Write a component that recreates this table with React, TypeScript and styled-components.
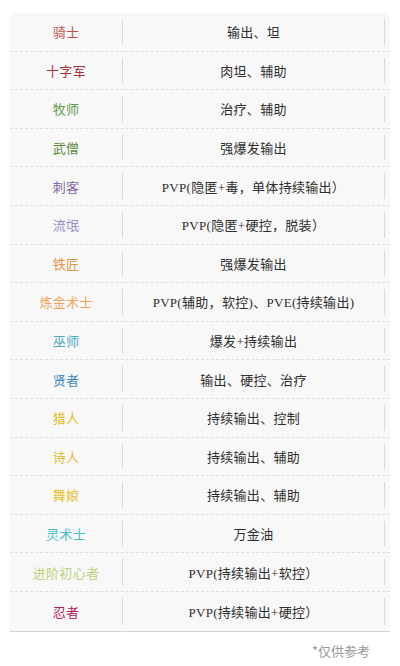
import React from 'react';
import styled, { createGlobalStyle } from 'styled-components';

const GlobalStyle = createGlobalStyle`
  html, body {
    margin: 0;
    padding: 0;
    background: #ffffff;
  }
  body {
    font-family: "Liberation Serif", "Noto Sans CJK SC", serif;
  }
`;

const Page = styled.div({
  width: "400px",
  height: "666px",
  padding: "13px 10px 0 10px",
  boxSizing: "border-box",
  display: "flex",
  flexDirection: "column",
});

const Table = styled.div({
  display: "flex",
  flexDirection: "column",
  background: "#f8f8f8",
  borderBottom: "1px solid #d4d4d4",
});

const Row = styled.div<{ $last?: boolean }>`
  display: grid;
  grid-template-columns: 113px 1fr;
  height: 38.6px;
  box-sizing: border-box;
  border-bottom: ${(p) => (p.$last ? "none" : "1px dashed #dcdcdc")};
  padding: 6px 5px 6px 0;
`;

const Cell = styled.div<{ $color?: string }>`
  display: flex;
  align-items: center;
  justify-content: center;
  border-right: 1px solid #d8d8d8;
  font-size: 13px;
  letter-spacing: 0.3px;
  color: ${(p) => p.$color || "#2e2e2e"};
  white-space: nowrap;
`;

const Note = styled.div({
  alignSelf: "flex-end",
  marginTop: "9px",
  marginRight: "20px",
  fontSize: "13px",
  color: "#9a9a9a",
  fontFamily: '"Noto Sans CJK SC", sans-serif',
});

type Job = { name: string; color: string; role: string };

const jobs: Job[] = [
  { name: "骑士", color: "#c0504d", role: "输出、坦" },
  { name: "十字军", color: "#a8323a", role: "肉坦、辅助" },
  { name: "牧师", color: "#5f9a45", role: "治疗、辅助" },
  { name: "武僧", color: "#5e8e3e", role: "强爆发输出" },
  { name: "刺客", color: "#8068a8", role: "PVP(隐匿+毒，单体持续输出）" },
  { name: "流氓", color: "#9c8fc4", role: "PVP(隐匿+硬控，脱装）" },
  { name: "铁匠", color: "#e39545", role: "强爆发输出" },
  { name: "炼金术士", color: "#eea55a", role: "PVP(辅助，软控)、PVE(持续输出)" },
  { name: "巫师", color: "#4fa9c4", role: "爆发+持续输出" },
  { name: "贤者", color: "#3f8bbd", role: "输出、硬控、治疗" },
  { name: "猎人", color: "#e5bd24", role: "持续输出、控制" },
  { name: "诗人", color: "#e4bd38", role: "持续输出、辅助" },
  { name: "舞娘", color: "#e6be28", role: "持续输出、辅助" },
  { name: "灵术士", color: "#3fbfc8", role: "万金油" },
  { name: "进阶初心者", color: "#b9d27a", role: "PVP(持续输出+软控）" },
  { name: "忍者", color: "#c0205a", role: "PVP(持续输出+硬控）" },
];

export default function App() {
  return (
    <>
      <GlobalStyle />
      <Page>
        <Table>
          {jobs.map((job, i) => (
            <Row key={job.name} $last={i === jobs.length - 1}>
              <Cell $color={job.color}>{job.name}</Cell>
              <Cell>{job.role}</Cell>
            </Row>
          ))}
        </Table>
        <Note>*仅供参考</Note>
      </Page>
    </>
  );
}
